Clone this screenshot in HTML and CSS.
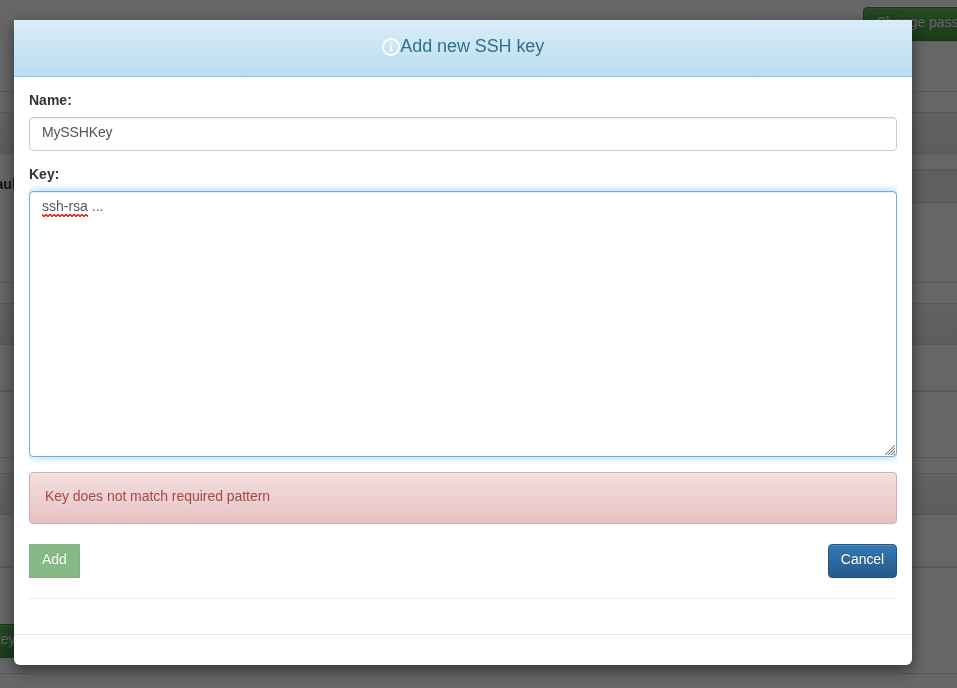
FILE: index.html
```html
<!DOCTYPE html>
<html lang="en">
<head>
<meta charset="utf-8">
<title>Add new SSH key</title>
<link rel="stylesheet" href="styles.css">
</head>
<body>
<div class="page">
  <div class="row toolbar"><button class="btn success change">Change password</button></div>
  <div class="row gap-a"></div>
  <div class="row heading"></div>
  <div class="row gap-b"></div>
  <div class="thead"><b class="th">Default</b><div class="band"></div></div>
  <div class="row body-a"></div>
  <div class="row gap-a"></div>
  <div class="row heading"></div>
  <div class="row body-b"></div>
  <div class="row body-c"></div>
  <div class="row gap-c"></div>
  <div class="row heading"></div>
  <div class="row body-d"></div>
  <div class="row footer-row"><button class="btn success add-key">Add key</button></div>
</div>
<div class="backdrop">
  <section class="modal" role="dialog" aria-labelledby="title">
    <header class="modal-header">
      <svg class="info" viewBox="0 0 18 18" aria-hidden="true"><circle cx="9" cy="9" r="8" fill="none" stroke="#fff" stroke-width="1.8"/><path d="M9 4.500v1.700M9 7.300v6" stroke="#fff" stroke-opacity=".8" stroke-width="2"/><path d="M7.500 7.800H9M7.200 13h3.600" stroke="#fff" stroke-opacity=".6" stroke-width="1"/></svg>
      <h4 id="title">Add new SSH key</h4>
    </header>
    <div class="modal-body">
      <label for="name">Name:</label>
      <input id="name" class="control" value="MySSHKey">
      <label class="key-label">Key:</label>
      <div class="control area" role="textbox" aria-multiline="true"><span class="misspelled">ssh-rsa<svg class="squiggle" viewBox="0 0 46 3" aria-hidden="true"><path d="M0 .5l2 2 2-2 2 2 2-2 2 2 2-2 2 2 2-2 2 2 2-2 2 2 2-2 2 2 2-2 2 2 2-2 2 2 2-2 2 2 2-2 2 2 2-2 2 2"/></svg></span> ...
        <svg class="grip" viewBox="0 0 10 10" aria-hidden="true"><path d="M0 10L10 0M3 10l7-7M6 10l4-4M8.500 10l1.500-1.500"/></svg>
      </div>
      <div class="alert">Key does not match required pattern</div>
      <div class="actions">
        <button class="btn success disabled">Add</button>
        <button class="btn primary">Cancel</button>
      </div>
      <hr>
    </div>
    <footer class="modal-footer"></footer>
  </section>
</div>
</body>
</html>
```
FILE: styles.css
```css
* { box-sizing: border-box; }
html, body { height: 100%; }
body {
  margin: 0;
  overflow: hidden;
  background: #fff;
  color: #333;
  font: 14px/20px "Nimbus Sans", "Liberation Sans", Arial, sans-serif;
}
.page { height: 688px; overflow: hidden; }
.row { border-bottom: 1px solid #ddd; }
.toolbar { height: 92px; padding: 7px 0 0 863px; white-space: nowrap; }
.gap-a { height: 21px; }
.heading { height: 41px; background: linear-gradient(#f5f5f5, #e8e8e8); }
.gap-b { height: 15px; border-bottom: 0; }
.thead { display: flex; height: 34px; }
.th { width: 46px; margin-left: -27px; padding-top: 5px; }
.band { flex: 1; border: solid #ddd; border-width: 2px 0 1px; background: #eee; }
.body-a { height: 80px; }
.body-b { height: 47px; border-bottom-width: 2px; }
.body-c { height: 66px; }
.gap-c { height: 16px; }
.body-d { height: 53px; border-bottom-width: 2px; }
.footer-row { height: 106px; padding-top: 56px; }
.add-key { margin-left: -48px; }

.btn {
  height: 34px;
  padding: 4px 12px 8px;
  border: 1px solid;
  border-radius: 4px;
  color: #fff;
  font: inherit;
  text-shadow: 0 -1px 0 rgba(0, 0, 0, .2);
  box-shadow: inset 0 1px 0 rgba(255, 255, 255, .15), 0 1px 1px rgba(0, 0, 0, .075);
}
.success { border-color: #3e8f3e; background: linear-gradient(#5cb85c, #419641); }
.primary { width: 69px; padding-left: 11px; padding-right: 11px; border-color: #245580; background: linear-gradient(#337ab7, #265a88); letter-spacing: -.05px; }
.disabled { border: 0; border-radius: 0; padding: 5px 13px 9px; background: #85b985; box-shadow: inset 0 0 0 1px #7fb57f; }

.backdrop { position: fixed; inset: 0; padding: 20px 45px 0 14px; background: rgba(0, 0, 0, .6); }
.modal { height: 645px; border-radius: 0 0 6px 6px; background: #fff; box-shadow: 0 5px 15px rgba(0, 0, 0, .5); }
.modal-header {
  display: flex;
  justify-content: center;
  height: 57px;
  padding-top: 15px;
  border-bottom: 1px solid #9acfea;
  background: linear-gradient(#d9edf7, #b9def0);
}
.info { width: 18px; height: 18px; margin: 3px .5px 0 0; }
h4 { margin: 0; color: #31708f; font-size: 18px; line-height: 22px; font-weight: 400; letter-spacing: -.08px; }
.modal-body { height: 557px; padding: 13px 15px 0; }
label { display: block; margin-bottom: 7px; font-weight: 700; }
.key-label { margin-top: 13px; }
.control {
  display: block;
  width: 100%;
  height: 34px;
  padding: 3px 12px 7px;
  border: 1px solid #ccc;
  border-radius: 4px;
  background: #fff;
  color: #555;
  font: inherit;
  box-shadow: inset 0 1px 1px rgba(0, 0, 0, .075);
}
input.control { letter-spacing: -.15px; }
.area {
  position: relative;
  height: 266px;
  padding-top: 4px;
  border-color: #66afe9;
  box-shadow: inset 0 1px 1px rgba(0, 0, 0, .075), 0 0 8px rgba(102, 175, 233, .6);
  clip-path: inset(-12px 0);
}
.misspelled { position: relative; display: inline-block; }
.squiggle { position: absolute; left: 0; bottom: -1px; width: 46px; height: 3px; fill: none; stroke: #f00; stroke-width: 1.3; }
.grip { position: absolute; right: 1px; bottom: 1px; width: 10px; height: 10px; fill: none; stroke: #888; stroke-width: 1.1; }
.alert {
  height: 52px;
  margin: 15px 0 20px;
  padding: 13px 15px;
  border: 1px solid #dca7a7;
  border-radius: 4px;
  background: linear-gradient(#f2dede, #e7c3c3);
  color: #a94442;
  letter-spacing: -.04px;
  text-shadow: 0 1px 0 rgba(255, 255, 255, .2);
  box-shadow: inset 0 1px 0 rgba(255, 255, 255, .25), 0 1px 2px rgba(0, 0, 0, .05);
}
.actions { display: flex; justify-content: space-between; }
hr { height: 0; margin: 20px 0; border: 0; border-top: 1px solid #eee; }
.modal-footer { height: 31px; border-top: 1px solid #e5e5e5; }
```
